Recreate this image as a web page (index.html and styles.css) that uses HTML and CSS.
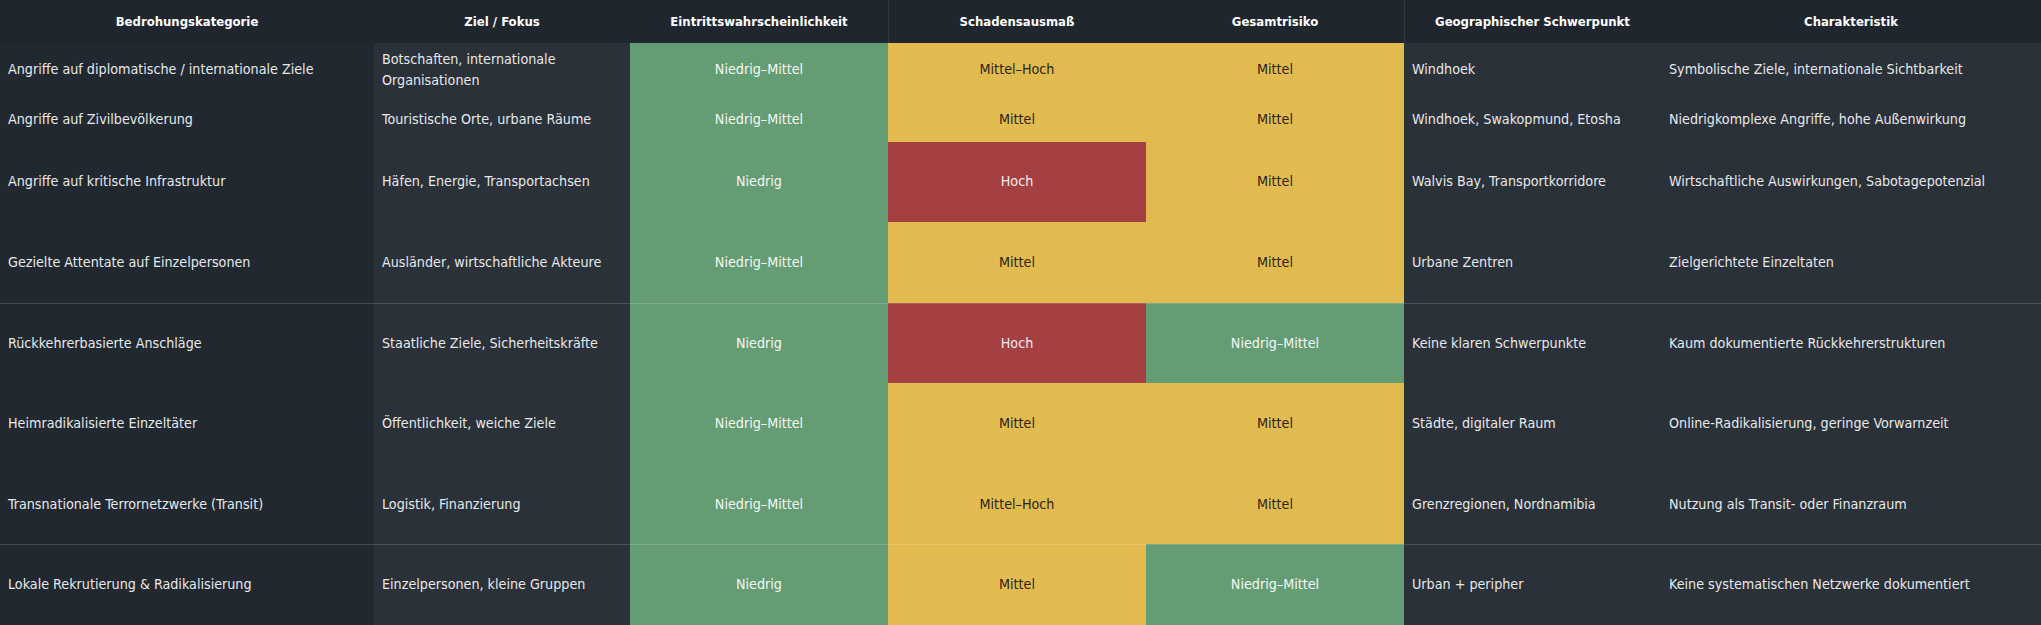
FILE: index.html
```html
<!DOCTYPE html>
<html lang="de">
<head>
<meta charset="utf-8">
<title>Bedrohungsmatrix</title>
<link rel="stylesheet" href="styles.css">
</head>
<body>
<table class="matrix">
  <colgroup>
    <col class="c1"><col class="c2"><col class="c3"><col class="c4"><col class="c5"><col class="c6"><col class="c7">
  </colgroup>
  <thead>
    <tr class="head">
      <th>Bedrohungskategorie</th>
      <th>Ziel / Fokus</th>
      <th>Eintrittswahrscheinlichkeit</th>
      <th class="vsep">Schadensausmaß</th>
      <th>Gesamtrisiko</th>
      <th class="vsep">Geographischer Schwerpunkt</th>
      <th>Charakteristik</th>
    </tr>
  </thead>
  <tbody>
    <tr class="r1">
      <td class="cat">Angriffe auf diplomatische / internationale Ziele</td>
      <td class="focus">Botschaften, internationale<br>Organisationen</td>
      <td class="lvl green">Niedrig–Mittel</td>
      <td class="lvl yellow">Mittel–Hoch</td>
      <td class="lvl yellow">Mittel</td>
      <td class="txt">Windhoek</td>
      <td class="txt">Symbolische Ziele, internationale Sichtbarkeit</td>
    </tr>
    <tr class="r2">
      <td class="cat">Angriffe auf Zivilbevölkerung</td>
      <td class="focus">Touristische Orte, urbane Räume</td>
      <td class="lvl green">Niedrig–Mittel</td>
      <td class="lvl yellow">Mittel</td>
      <td class="lvl yellow">Mittel</td>
      <td class="txt">Windhoek, Swakopmund, Etosha</td>
      <td class="txt">Niedrigkomplexe Angriffe, hohe Außenwirkung</td>
    </tr>
    <tr class="rx">
      <td class="cat">Angriffe auf kritische Infrastruktur</td>
      <td class="focus">Häfen, Energie, Transportachsen</td>
      <td class="lvl green">Niedrig</td>
      <td class="lvl red">Hoch</td>
      <td class="lvl yellow">Mittel</td>
      <td class="txt">Walvis Bay, Transportkorridore</td>
      <td class="txt">Wirtschaftliche Auswirkungen, Sabotagepotenzial</td>
    </tr>
    <tr class="rx">
      <td class="cat">Gezielte Attentate auf Einzelpersonen</td>
      <td class="focus">Ausländer, wirtschaftliche Akteure</td>
      <td class="lvl green">Niedrig–Mittel</td>
      <td class="lvl yellow">Mittel</td>
      <td class="lvl yellow">Mittel</td>
      <td class="txt">Urbane Zentren</td>
      <td class="txt">Zielgerichtete Einzeltaten</td>
    </tr>
    <tr class="rx sep">
      <td class="cat">Rückkehrerbasierte Anschläge</td>
      <td class="focus">Staatliche Ziele, Sicherheitskräfte</td>
      <td class="lvl green">Niedrig</td>
      <td class="lvl red">Hoch</td>
      <td class="lvl green">Niedrig–Mittel</td>
      <td class="txt">Keine klaren Schwerpunkte</td>
      <td class="txt">Kaum dokumentierte Rückkehrerstrukturen</td>
    </tr>
    <tr class="rx">
      <td class="cat">Heimradikalisierte Einzeltäter</td>
      <td class="focus">Öffentlichkeit, weiche Ziele</td>
      <td class="lvl green">Niedrig–Mittel</td>
      <td class="lvl yellow">Mittel</td>
      <td class="lvl yellow">Mittel</td>
      <td class="txt">Städte, digitaler Raum</td>
      <td class="txt">Online-Radikalisierung, geringe Vorwarnzeit</td>
    </tr>
    <tr class="rx">
      <td class="cat">Transnationale Terrornetzwerke (Transit)</td>
      <td class="focus">Logistik, Finanzierung</td>
      <td class="lvl green">Niedrig–Mittel</td>
      <td class="lvl yellow">Mittel–Hoch</td>
      <td class="lvl yellow">Mittel</td>
      <td class="txt">Grenzregionen, Nordnamibia</td>
      <td class="txt">Nutzung als Transit- oder Finanzraum</td>
    </tr>
    <tr class="rx sep">
      <td class="cat">Lokale Rekrutierung &amp; Radikalisierung</td>
      <td class="focus">Einzelpersonen, kleine Gruppen</td>
      <td class="lvl green">Niedrig</td>
      <td class="lvl yellow">Mittel</td>
      <td class="lvl green">Niedrig–Mittel</td>
      <td class="txt">Urban + peripher</td>
      <td class="txt">Keine systematischen Netzwerke dokumentiert</td>
    </tr>
  </tbody>
</table>
</body>
</html>
```

FILE: styles.css
```css
html, body {
  margin: 0;
  padding: 0;
  background: #222830;
}

body {
  font-family: "DejaVu Sans Condensed", "Liberation Sans", sans-serif;
  font-size: 14.2px;
  color: #e6e8ea;
}

.matrix {
  width: 2041px;
  height: 625px;
  table-layout: fixed;
  border-collapse: collapse;
  border-spacing: 0;
}

.c1 { width: 374px; }
.c2 { width: 256px; }
.c3 { width: 258px; }
.c4 { width: 258px; }
.c5 { width: 258px; }
.c6 { width: 257px; }
.c7 { width: 380px; }

.matrix th,
.matrix td {
  padding: 0 8px;
  vertical-align: middle;
  line-height: 21px;
}

.head { height: 43px; }
.r1 { height: 53px; }
.r2 { height: 45px; }
.rx { height: 80px; }

.matrix th {
  background: #20262e;
  color: #ffffff;
  font-size: 13px;
  font-weight: bold;
  text-align: center;
}

.matrix th.vsep {
  box-shadow: inset 1px 0 0 rgba(255, 255, 255, 0.09);
}

.cat {
  background: #212830;
  text-align: left;
}

.focus,
.txt {
  background: #2b3139;
  text-align: left;
}

.lvl { text-align: center; }

.green {
  background: #649d74;
  color: #f4f7f4;
}

.yellow {
  background: #e2bb50;
  color: #2c2516;
}

.red {
  background: #a54042;
  color: #f6eaea;
}

.sep td {
  box-shadow: inset 0 1px 0 rgba(255, 255, 255, 0.16);
}
```
